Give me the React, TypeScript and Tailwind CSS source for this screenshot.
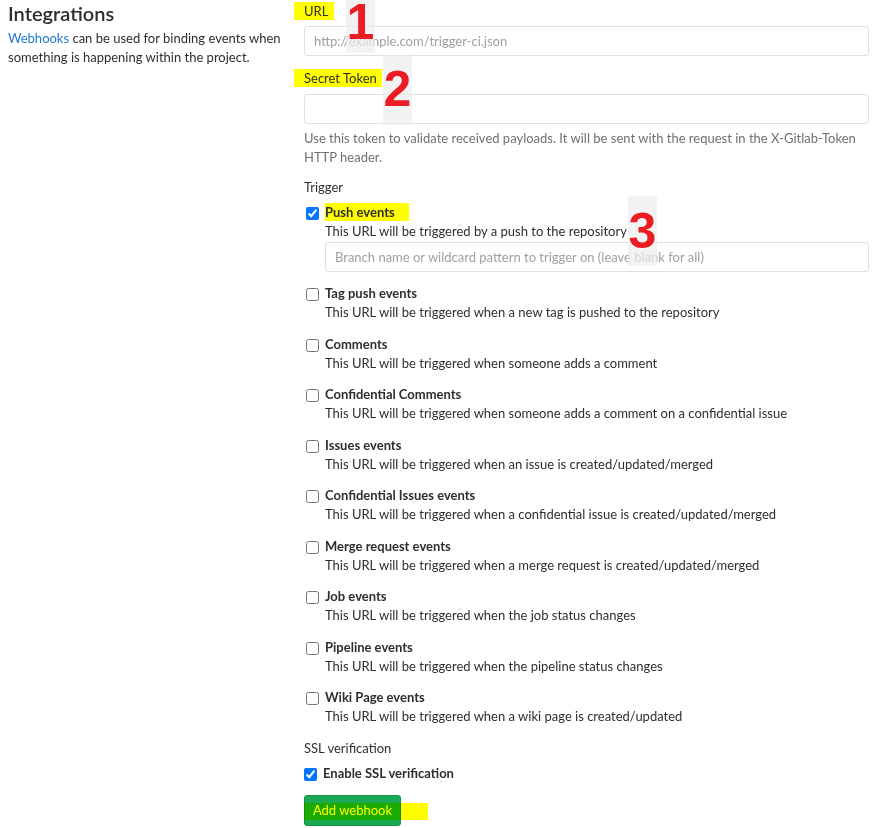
import React from "react";

const events = [
  { t: "Tag push events", d: "This URL will be triggered when a new tag is pushed to the repository" },
  { t: "Comments", d: "This URL will be triggered when someone adds a comment" },
  { t: "Confidential Comments", d: "This URL will be triggered when someone adds a comment on a confidential issue" },
  { t: "Issues events", d: "This URL will be triggered when an issue is created/updated/merged" },
  { t: "Confidential Issues events", d: "This URL will be triggered when a confidential issue is created/updated/merged" },
  { t: "Merge request events", d: "This URL will be triggered when a merge request is created/updated/merged" },
  { t: "Job events", d: "This URL will be triggered when the job status changes" },
  { t: "Pipeline events", d: "This URL will be triggered when the pipeline status changes" },
  { t: "Wiki Page events", d: "This URL will be triggered when a wiki page is created/updated" },
];

function Num({ n, className }: { n: string; className: string }) {
  return (
    <div
      className={
        "absolute w-[29px] bg-[#ededed]/70 flex justify-center text-[#ec1c24] font-bold text-[50px] leading-none " +
        className
      }
      style={{ fontFamily: '"Liberation Sans", Arial, sans-serif' }}
    >
      {n}
    </div>
  );
}

export default function App() {
  return (
    <div
      className="relative w-[893px] h-[828px] bg-white text-[#2e2e2e] text-[13px] leading-[19px] overflow-hidden"
      style={{ fontFamily: 'Lato, "Open Sans", sans-serif' }}
    >
      <div className="flex pl-2">
        <div className="w-[296px] shrink-0">
          <h2 className="text-[20px] leading-[26px] font-semibold">Integrations</h2>
          <p className="mt-[3px]">
            <span className="text-[#1f78d1]">Webhooks</span> can be used for binding events when
            something is happening within the project.
          </p>
        </div>
        <div className="w-[565px] shrink-0 pt-[2px]">
          <div>
            <span className="-ml-[10px] pl-[10px] pr-[6px] py-[1px] bg-[#ffff00]">URL</span>
          </div>
          <div className="mt-[5px] h-[30px] border border-[#dfdfdf] rounded-[3px] px-[9px] flex items-center text-[#a0a0a0]">
            http://example.com/trigger-ci.json
          </div>
          <div className="mt-[13px]">
            <span className="-ml-[10px] pl-[10px] pr-[5px] py-[1px] bg-[#ffff00]">Secret Token</span>
          </div>
          <div className="mt-[6px] h-[30px] border border-[#dfdfdf] rounded-[3px]" />
          <p className="mt-[5px] text-[#707070]">
            Use this token to validate received payloads. It will be sent with the request in the X-Gitlab-Token
            HTTP header.
          </p>
          <div className="mt-[11px]">Trigger</div>
          <div className="mt-[6px] flex">
            <input type="checkbox" defaultChecked className="w-[13px] h-[13px] ml-[2px] mt-[4px] shrink-0" />
            <div className="ml-[6px] flex-1">
              <div className="font-bold">
                <span className="bg-[#ffff00] pr-[14px] py-[1px]">Push events</span>
              </div>
              <div>This URL will be triggered by a push to the repository</div>
              <div className="mt-px h-[30px] border border-[#dfdfdf] rounded-[3px] px-[9px] flex items-center text-[#a0a0a0]">
                Branch name or wildcard pattern to trigger on (leave blank for all)
              </div>
            </div>
          </div>
          {events.map((e, i) => (
            <div key={e.t} className={(i === 0 ? "mt-[12px]" : "mt-[12.5px]") + " flex"}>
              <input type="checkbox" className="w-[13px] h-[13px] ml-[2px] mt-[4px] shrink-0" />
              <div className="ml-[6px]">
                <div className="font-bold">{e.t}</div>
                <div>{e.d}</div>
              </div>
            </div>
          ))}
          <div className="mt-[12.5px]">SSL verification</div>
          <div className="mt-[6px] flex">
            <input type="checkbox" defaultChecked className="w-[13px] h-[13px] mt-[4px] shrink-0" />
            <div className="ml-[6px] font-bold">Enable SSL verification</div>
          </div>
          <div className="relative mt-[12.5px] w-[97px]">
            <button className="w-[97px] h-[31px] rounded-[3px] bg-[#1aaa55] border border-[#168f48] text-white text-[13px]">
              Add webhook
            </button>
            <div className="absolute left-0 top-[8px] w-[124px] h-[17px] bg-[#ffff00] mix-blend-multiply" />
          </div>
        </div>
      </div>
      <Num n="1" className="left-[346px] top-0 h-[55px] -mt-[3px] pt-0" />
      <Num n="2" className="left-[383px] top-[55px] h-[70px] pt-[9px]" />
      <Num n="3" className="left-[628px] top-[196px] h-[70px] pt-[10px]" />
    </div>
  );
}
